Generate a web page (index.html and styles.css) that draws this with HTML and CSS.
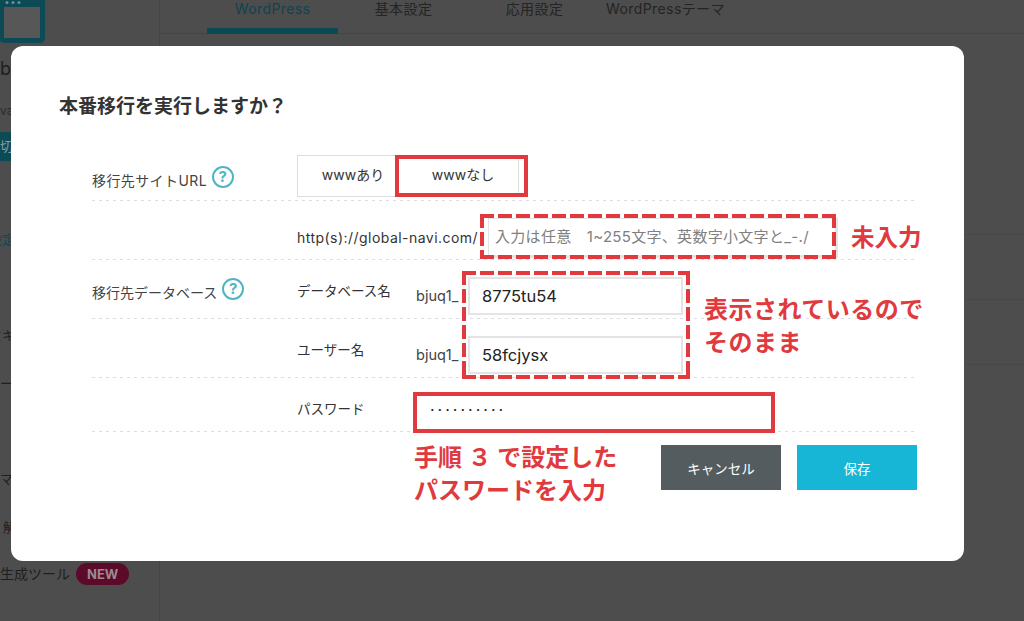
FILE: index.html
```html
<!DOCTYPE html>
<html lang="ja">
<head>
    <meta charset="UTF-8">
    <meta name="viewport" content="width=device-width, initial-scale=1.0">
    <title>本番移行</title>
    <link rel="stylesheet" href="styles.css">
</head>
<body>
    <div class="page">
        <aside class="sidebar">
            <svg class="site-icon" width="46" height="44" viewBox="0 0 46 44">
                <rect x="-1" y="-8" width="46" height="51" rx="5" fill="#0c4a56"/>
                <rect x="4" y="7" width="36" height="31" fill="#575757"/>
                <circle cx="7" cy="2.500" r="1.500" fill="#6f8e94"/>
                <circle cx="13" cy="2.500" r="1.500" fill="#6f8e94"/>
                <circle cx="19" cy="2.500" r="1.500" fill="#6f8e94"/>
            </svg>
            <div class="site-name">b</div>
            <div class="site-sub">va</div>
            <div class="site-switch">切り替え</div>
            <ul class="side-menu">
                <li class="side-item side-active shift-1">設定</li>
                <li class="side-item shift-0">&nbsp;</li>
                <li class="side-item shift-1">セキュリティ</li>
                <li class="side-item shift-2">コピー</li>
                <li class="side-item shift-0">&nbsp;</li>
                <li class="side-item shift-2">テーマ</li>
                <li class="side-item shift-0">解析</li>
                <li class="side-item side-tool">
                    サイト生成ツール<span class="new-badge">NEW</span>
                </li>
            </ul>
        </aside>
        <main class="content">
            <nav class="tabs">
                <div class="tab tab-active">WordPress</div>
                <div class="tab">基本設定</div>
                <div class="tab">応用設定</div>
                <div class="tab">WordPressテーマ</div>
            </nav>
            <div class="content-lines">
                <div class="content-line"></div>
                <div class="content-line"></div>
                <div class="content-line"></div>
            </div>
        </main>
    </div>

    <div class="modal">
        <h1 class="modal-title">本番移行を実行しますか？</h1>

        <div class="form">
            <div class="form-row row-www">
                <div class="row-label">
                    移行先サイトURL
                    <span class="help">?</span>
                </div>
                <div class="segmented">
                    <div class="segment">wwwあり</div>
                    <div class="segment">wwwなし</div>
                </div>
            </div>
            <div class="form-row row-url">
                <div class="row-label"></div>
                <span class="url-prefix">http(s)://global-navi.com/</span>
                <div class="field field-url placeholder">入力は任意　1~255文字、英数字小文字と_-./</div>
            </div>
            <div class="form-row row-db">
                <div class="row-label row-label-db">
                    移行先データベース
                    <span class="help">?</span>
                </div>
                <span class="field-name">データベース名</span>
                <span class="field-prefix">bjuq1_</span>
                <div class="field field-db">8775tu54</div>
            </div>
            <div class="form-row row-db">
                <div class="row-label"></div>
                <span class="field-name">ユーザー名</span>
                <span class="field-prefix">bjuq1_</span>
                <div class="field field-db">58fcjysx</div>
            </div>
            <div class="form-row row-pass">
                <div class="row-label"></div>
                <span class="field-name field-name-pass">パスワード</span>
                <div class="field field-pass">··········</div>
            </div>
        </div>

        <div class="actions">
            <button class="btn btn-cancel">キャンセル</button>
            <button class="btn btn-save">保存</button>
        </div>

        <!-- annotations drawn on top of the screenshot -->
        <div class="mark mark-www"></div>
        <div class="mark mark-pass"></div>
        <div class="mark mark-dashed mark-url"></div>
        <div class="mark mark-dashed mark-db"></div>
        <div class="note note-url">未入力</div>
        <div class="note note-db">表示されているので<br>そのまま</div>
        <div class="note note-pass">手順 ３ で設定した<br>パスワードを入力</div>
    </div>
</body>
</html>
```

FILE: styles.css
```css
* {
    box-sizing: border-box;
}
body {
    margin: 0;
    height: 621px;
    overflow: hidden;
    background-color: #4d4d4d;
    font-family: 'Inter', 'Noto Sans CJK JP', sans-serif;
    color: #2b2b2b;
}
.page {
    display: flex;
    height: 621px;
}
.sidebar {
    width: 160px;
    flex-shrink: 0;
    border-right: 1px solid #454545;
    color: #1f1f1f;
    overflow: hidden;
}
.site-icon {
    display: block;
}
.site-name {
    margin-top: 14px;
    font-size: 18px;
    line-height: 22px;
}
.site-sub {
    margin-top: 23px;
    font-size: 12px;
    line-height: 16px;
    color: #2a2a2a;
}
.site-switch {
    margin-top: 13px;
    height: 29px;
    line-height: 29px;
    font-size: 13px;
    color: #8b9ea1;
    background-color: #0c4a56;
}
.side-menu {
    list-style: none;
    margin: 67px 0 0 0;
    padding: 0;
}
.side-item {
    height: 48px;
    line-height: 22px;
    font-size: 13px;
    white-space: nowrap;
}
.shift-0 {
    margin-left: 3px;
}
.shift-1 {
    margin-left: -11px;
}
.shift-2 {
    margin-left: -26px;
}
.side-active {
    color: #0c4a56;
}
.side-tool {
    display: flex;
    align-items: center;
    height: 24px;
    margin-top: -2px;
    margin-left: -42px;
    font-size: 14px;
}
.new-badge {
    margin-left: 6px;
    padding: 0 11px;
    height: 22px;
    line-height: 22px;
    border-radius: 11px;
    background-color: #5c0a2a;
    color: #9c8a90;
    font-size: 13px;
    font-weight: bold;
}
.content {
    flex: 1;
}
.tabs {
    display: flex;
    height: 34px;
    padding-left: 47px;
    border-bottom: 1px solid #454545;
}
.tab {
    width: 131px;
    height: 34px;
    text-align: center;
    font-size: 14px;
    letter-spacing: 0.4px;
    line-height: 17px;
    color: #242424;
    white-space: nowrap;
}
.tab-active {
    color: #0d4450;
    border-bottom: 6px solid #0a4a55;
}
.content-lines {
    padding-top: 200px;
}
.content-line {
    height: 65px;
    border-top: 1px solid #484848;
}

/* modal */
.modal {
    position: absolute;
    left: 11px;
    top: 46px;
    width: 953px;
    height: 515px;
    padding: 47px 47px 0 48px;
    background-color: white;
    border-radius: 12px;
}
.modal-title {
    margin: 0;
    height: 28px;
    font-size: 19px;
    line-height: 28px;
    font-weight: bold;
    color: #333;
}
.form {
    margin: 30px 0 0 33px;
}
.form-row {
    display: flex;
    padding-bottom: 1px;
    background-image: linear-gradient(to right, #dcdcdc 3px, transparent 3px);
    background-size: 7px 1px;
    background-position: left bottom;
    background-repeat: repeat-x;
    font-size: 13.5px;
}
.row-www {
    height: 50px;
    align-items: flex-start;
    padding-top: 4px;
}
.row-url {
    height: 59px;
    align-items: flex-end;
    padding-bottom: 2px;
}
.row-db {
    height: 59px;
    align-items: flex-end;
    padding-bottom: 4px;
}
.row-pass {
    height: 54px;
    align-items: flex-end;
    padding-bottom: 4px;
}
.row-label {
    width: 205px;
    flex-shrink: 0;
    align-self: center;
    display: flex;
    align-items: center;
    gap: 5px;
    font-size: 14px;
    color: #444;
}
.row-www .row-label {
    margin-top: 4px;
    letter-spacing: 0.4px;
}
.row-label-db {
    align-self: flex-start;
    margin-top: 22px;
}
.help {
    display: inline-block;
    width: 22px;
    height: 22px;
    margin-top: -6px;
    border: 2px solid #4fb4c4;
    border-radius: 50%;
    color: #4fb4c4;
    font-size: 15px;
    font-weight: bold;
    line-height: 18px;
    text-align: center;
}
.segmented {
    display: flex;
    width: 222px;
    height: 42px;
    border: 1px solid #ddd;
}
.segment {
    flex: 1;
    text-align: center;
    line-height: 38px;
    font-size: 14px;
    color: #333;
}
.url-prefix {
    width: 191px;
    flex-shrink: 0;
    line-height: 40px;
    color: #333;
    font-size: 14px;
    letter-spacing: 0.46px;
    white-space: nowrap;
}
.field {
    height: 38px;
    border: 2px solid #e4e4e4;
    background-color: white;
    font-size: 16.500px;
    line-height: 34px;
    white-space: nowrap;
}
.field-url {
    width: 350px;
    height: 40px;
    line-height: 36px;
    padding-left: 6px;
    border-width: 1px 3px 3px 1px;
    font-size: 15px;
}
.placeholder {
    color: #808080;
    letter-spacing: 0.3px;
}
.field-name {
    width: 119px;
    flex-shrink: 0;
    align-self: center;
    margin-top: 4px;
    color: #333;
}
.field-name-pass {
    margin-top: 10px;
}
.field-prefix {
    width: 52px;
    flex-shrink: 0;
    line-height: 38px;
    font-size: 14.500px;
    color: #444;
}
.field-db {
    width: 215px;
    padding-left: 12px;
    color: #222;
}
.field-pass {
    width: 356px;
    padding-left: 12px;
    border-color: white;
    color: #222;
    font-size: 16px;
    line-height: 36px;
    letter-spacing: 3px;
}
.actions {
    display: flex;
    justify-content: flex-end;
    gap: 16px;
    margin-top: 13px;
}
.btn {
    width: 120px;
    height: 45px;
    border: none;
    color: white;
    font-family: inherit;
    font-size: 13.5px;
}
.btn-cancel {
    background-color: #555c5f;
}
.btn-save {
    background-color: #17b5d6;
}

/* red annotations */
.mark {
    position: absolute;
    border: 4px solid #e03a3e;
}
.mark-dashed {
    border: none;
    background-image:
        repeating-linear-gradient(to right, #e03a3e 0 14px, transparent 14px 18px),
        repeating-linear-gradient(to right, #e03a3e 0 14px, transparent 14px 18px),
        repeating-linear-gradient(to bottom, #e03a3e 0 14px, transparent 14px 18px),
        repeating-linear-gradient(to bottom, #e03a3e 0 14px, transparent 14px 18px);
    background-size: 100% 4px, 100% 4px, 4px 100%, 4px 100%;
    background-position: left top, left bottom, left top, right top;
    background-repeat: no-repeat;
}
.mark-www {
    left: 384px;
    top: 109px;
    width: 133px;
    height: 42px;
}
.mark-pass {
    left: 402px;
    top: 346px;
    width: 362px;
    height: 41px;
}
.mark-url {
    left: 469px;
    top: 168px;
    width: 356px;
    height: 45px;
}
.mark-db {
    left: 451px;
    top: 225px;
    width: 228px;
    height: 108px;
}
.note {
    position: absolute;
    color: #e03a3e;
    font-size: 24px;
    font-weight: bold;
    line-height: 33px;
    white-space: nowrap;
}
.note-url {
    left: 840px;
    top: 175px;
    font-size: 23.500px;
}
.note-db {
    left: 693px;
    top: 247px;
    letter-spacing: 0.5px;
}
.note-pass {
    left: 403px;
    top: 395px;
}
```
